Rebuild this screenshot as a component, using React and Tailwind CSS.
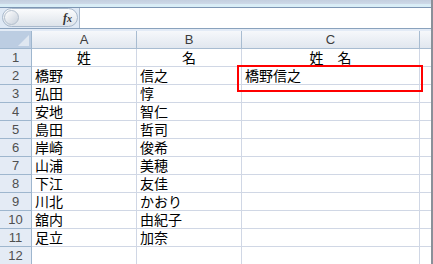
import React from "react";

const rows = [
  ["姓", "名", "姓　名"],
  ["橋野", "信之", "橋野信之"],
  ["弘田", "惇", ""],
  ["安地", "智仁", ""],
  ["島田", "哲司", ""],
  ["岸崎", "俊希", ""],
  ["山浦", "美穂", ""],
  ["下江", "友佳", ""],
  ["川北", "かおり", ""],
  ["舘内", "由紀子", ""],
  ["足立", "加奈", ""],
  ["", "", ""],
];

const jp = { fontFamily: '"MS PGothic", "Noto Sans CJK JP", sans-serif' };

const App = () => {
  return (
    <div className="relative w-[433px] h-[264px] overflow-hidden bg-[#dfe9f5] border-r-2 border-[#8a9099]">
      {/* ribbon bottom */}
      <div className="h-[4px] bg-gradient-to-b from-[#c3cfdf] to-[#cdd9e8]" />
      <div className="h-[4px] bg-[#d9edf6] border-b border-[#7d96b3]" />

      {/* formula bar */}
      <div className="flex h-[21px] bg-[#dfe9f5] border-b border-[#8aa2bd]">
        <div className="relative flex items-center w-[76px] ml-[2px] h-[19px] rounded-full border border-[#a9b9cc] bg-gradient-to-b from-[#fbfcfd] to-[#dde3ea]">
          <div className="ml-[1px] w-[15px] h-[15px] rounded-full border border-[#b3bfcd] bg-gradient-to-br from-[#ffffff] to-[#c9d1dc]" />
          <span
            className="ml-auto mr-[5px] text-[12px] italic font-bold text-[#333] leading-none"
            style={{ fontFamily: '"Liberation Serif", serif' }}
          >
            f<span className="text-[10px]">x</span>
          </span>
        </div>
        <div className="flex-1 ml-[1px] bg-white border-l border-[#a9b9cc]" />
      </div>
      <div className="h-[2px] bg-[#e3ebf6]" />

      {/* sheet */}
      <div className="grid grid-cols-[32px_105px_105px_178px_13px] bg-white">
        <div className="relative h-[18px] bg-[#bccde2] border-r border-b border-[#9eb6ce]">
          <div className="absolute right-[2px] bottom-[2px] w-0 h-0 border-l-[11px] border-l-transparent border-b-[11px] border-b-[#dfe7f1]" />
        </div>
        {["A", "B", "C", ""].map((c, i) => (
          <div
            key={i}
            className="h-[18px] flex items-center justify-center bg-gradient-to-b from-[#f6f8fb] to-[#e1e7ef] border-r border-b border-[#a8bcd1] text-[13px] leading-[17px] text-[#3c3c3c]"
            style={{ fontFamily: '"Liberation Sans", sans-serif' }}
          >
            {c}
          </div>
        ))}

        {rows.map((r, i) => (
          <React.Fragment key={i}>
            <div
              className="h-[18px] flex items-center justify-center bg-[#e4ebf5] border-r border-b border-[#9eb6ce] text-[13px] leading-[17px] text-[#4f4f4f]"
              style={{ fontFamily: '"Liberation Sans", sans-serif' }}
            >
              {i + 1}
            </div>
            {r.map((v, j) => (
              <div
                key={j}
                className={`h-[18px] flex items-center border-r border-b border-[#d0d7e5] text-[14px] leading-[17px] text-black ${
                  i === 0 ? "justify-center" : "pl-[3px]"
                }`}
                style={jp}
              >
                {v}
              </div>
            ))}
            <div className="h-[18px] border-r border-b border-[#d0d7e5]" />
          </React.Fragment>
        ))}
      </div>

      {/* red annotation box */}
      <div className="absolute left-[237px] top-[65px] w-[186px] h-[27px] border-2 border-[#ff0000]" />
    </div>
  );
};

export default App;
